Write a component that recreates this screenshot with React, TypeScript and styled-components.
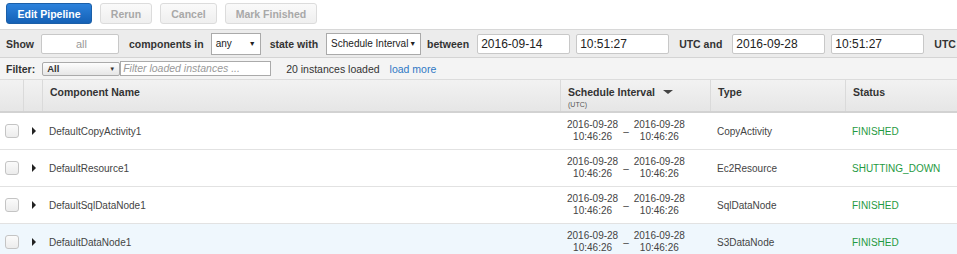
import * as React from "react"
import styled, { createGlobalStyle } from "styled-components"

const GlobalStyle = createGlobalStyle`
  body {
    margin: 0;
    font-family: "Liberation Sans", Arial, sans-serif;
    font-size: 12px;
    color: #333;
    background: #fff;
    overflow: hidden;
  }
`

const rows = [
  { name: 'DefaultCopyActivity1', type: 'CopyActivity', status: 'FINISHED' },
  { name: 'DefaultResource1', type: 'Ec2Resource', status: 'SHUTTING_DOWN' },
  { name: 'DefaultSqlDataNode1', type: 'SqlDataNode', status: 'FINISHED' },
  { name: 'DefaultDataNode1', type: 'S3DataNode', status: 'FINISHED', hover: true },
]

const Toolbar = styled.div`
  display: flex;
  gap: 8px;
  padding: 3px 6px 0;
  height: 26px;
`

const Button = styled.button<{ $primary?: boolean; $w: number }>`
  width: ${p => p.$w}px;
  height: 21px;
  padding: 0;
  border-radius: 3px;
  font-family: inherit;
  font-size: 10.5px;
  font-weight: bold;
  border: 1px solid ${p => p.$primary ? '#1b5fa8' : '#dcdcdc'};
  color: ${p => p.$primary ? '#fff' : '#a8a8a8'};
  background: ${p => p.$primary
    ? 'linear-gradient(#2c82dc, #1561b6)'
    : 'linear-gradient(#fafafa, #efefef)'};
`

const FilterBar = styled.div`
  display: flex;
  align-items: center;
  height: 27px;
  padding-left: 6px;
  background: #ececec;
  border-top: 1px solid #d8d8d8;
  border-bottom: 1px solid #d4d4d4;
  white-space: nowrap;
  overflow: hidden;
`

const Label = styled.span<{ $ml?: number }>`
  font-weight: bold;
  font-size: 10.5px;
  color: #333;
  margin-left: ${p => p.$ml ?? 0}px;
`

const TextBox = styled.div<{ $w: number; $ml: number; $center?: boolean }>`
  box-sizing: border-box;
  flex-shrink: 0;
  width: ${p => p.$w}px;
  height: 20px;
  margin-left: ${p => p.$ml}px;
  background: #fff;
  border: 1px solid #c8c8c8;
  border-radius: 2px;
  font-size: 12px;
  line-height: 18px;
  padding-left: 3px;
  color: #222;
  text-align: ${p => p.$center ? 'center' : 'left'};
`

const Muted = styled.span`
  color: #999;
  font-size: 11px;
`

const Select = styled.div<{ $w: number; $ml: number }>`
  box-sizing: border-box;
  flex-shrink: 0;
  display: flex;
  align-items: center;
  justify-content: space-between;
  width: ${p => p.$w}px;
  height: 22px;
  margin-left: ${p => p.$ml}px;
  padding: 0 4px;
  background: #fff;
  border: 1px solid #aaa;
  font-size: 10px;
  color: #222;
  &::after {
    content: '▼';
    font-size: 7px;
    color: #222;
  }
`

const FilterRow = styled.div`
  display: flex;
  align-items: center;
  height: 21px;
  padding-left: 6px;
  background: #f4f4f4;
  border-bottom: 1px solid #dcdcdc;
  white-space: nowrap;
`

const SmallSelect = styled.div`
  box-sizing: border-box;
  display: flex;
  align-items: center;
  justify-content: space-between;
  width: 78px;
  height: 14px;
  margin-left: 7px;
  padding: 0 4px;
  background: linear-gradient(#fdfdfd, #e6e6e6);
  border: 1px solid #aaa;
  border-radius: 2px;
  font-size: 9.5px;
  font-weight: bold;
  color: #333;
  &::after {
    content: '▼';
    font-size: 6px;
  }
`

const FilterInput = styled.div`
  box-sizing: border-box;
  width: 151px;
  height: 15px;
  background: #fff;
  border: 1px solid #aaa;
  padding-left: 2px;
  font-size: 10.5px;
  line-height: 13px;
  font-style: italic;
  color: #999;
`

const Count = styled.span`
  margin-left: 15px;
  font-size: 10.5px;
  color: #333;
`

const LoadMore = styled.span`
  margin-left: 10px;
  font-size: 10.5px;
  color: #2f78c4;
`

const Grid = styled.div<{ $bg?: string }>`
  display: grid;
  grid-template-columns: 23px 19px 518px 150px 135px 1fr;
  background: ${p => p.$bg ?? '#fff'};
`

const HeaderRow = styled(Grid)`
  height: 31px;
  background: linear-gradient(#f2f2f2, #e6e6e6);
  border-bottom: 2px solid #d2d2d2;
`

const HeadCell = styled.div<{ $border?: boolean }>`
  padding: 6px 7px 0;
  font-weight: bold;
  font-size: 10.5px;
  color: #333;
  border-left: ${p => p.$border === false ? 'none' : '1px solid #dadada'};
`

const SortTitle = styled.div`
  display: flex;
  align-items: center;
  gap: 8px;
`

const Utc = styled.div`
  font-size: 7px;
  font-weight: normal;
  color: #555;
  margin-top: 3px;
`

const Row = styled(Grid)`
  height: 36px;
  border-bottom: 1px solid #e2e2e2;
  align-items: center;
  font-size: 10px;
  color: #444;
`

const CheckCell = styled.div`
  display: flex;
  justify-content: center;
  padding-left: 1px;
`

const Checkbox = styled.div`
  width: 12px;
  height: 12px;
  border: 1px solid #c4c4c4;
  border-radius: 3px;
  background: linear-gradient(#fbfbfb, #ececec);
`

const Expander = styled.div`
  width: 0;
  height: 0;
  margin-left: 9px;
  border-top: 4px solid transparent;
  border-bottom: 4px solid transparent;
  border-left: 4px solid #222;
`

const NameCell = styled.div`
  padding-left: 7px;
`

const Interval = styled.div`
  display: flex;
  align-items: center;
  padding-left: 7px;
`

const Stamp = styled.div`
  text-align: center;
  line-height: 12px;
`

const Dash = styled.span`
  margin: 0 5px;
`

const TextCell = styled.div`
  padding-left: 7px;
`

const Status = styled.div`
  padding-left: 7px;
  color: #1f9a3f;
`

const Arrow = () => (
  <svg width="10" height="6" viewBox="0 0 10 6">
    <path d="M0 1 L10 1 L5 5 Z" fill="#444" />
  </svg>
)

const DateStamp = () => (
  <Stamp>2016-09-28<br />10:46:26</Stamp>
)

export default function App() {
  return (
    <>
      <GlobalStyle />
      <Toolbar>
        <Button $primary $w={86}>Edit Pipeline</Button>
        <Button $w={52}>Rerun</Button>
        <Button $w={57}>Cancel</Button>
        <Button $w={92}>Mark Finished</Button>
      </Toolbar>
      <FilterBar>
        <Label>Show</Label>
        <TextBox $w={78} $ml={7} $center><Muted>all</Muted></TextBox>
        <Label $ml={10}>components in</Label>
        <Select $w={50} $ml={7}>any</Select>
        <Label $ml={9}>state with</Label>
        <Select $w={95} $ml={8}>Schedule Interval</Select>
        <Label $ml={6}>between</Label>
        <TextBox $w={93} $ml={8}>2016-09-14</TextBox>
        <TextBox $w={93} $ml={6}>10:51:27</TextBox>
        <Label $ml={10}>UTC and</Label>
        <TextBox $w={93} $ml={10}>2016-09-28</TextBox>
        <TextBox $w={93} $ml={6}>10:51:27</TextBox>
        <Label $ml={10}>UTC</Label>
      </FilterBar>
      <FilterRow>
        <Label>Filter:</Label>
        <SmallSelect>All</SmallSelect>
        <FilterInput>Filter loaded instances ...</FilterInput>
        <Count>20 instances loaded</Count>
        <LoadMore>load more</LoadMore>
      </FilterRow>
      <HeaderRow>
        <HeadCell $border={false} />
        <HeadCell />
        <HeadCell>Component Name</HeadCell>
        <HeadCell>
          <SortTitle>Schedule Interval <Arrow /></SortTitle>
          <Utc>(UTC)</Utc>
        </HeadCell>
        <HeadCell>Type</HeadCell>
        <HeadCell>Status</HeadCell>
      </HeaderRow>
      {rows.map(r => (
        <Row key={r.name} $bg={r.hover ? '#eff7fd' : '#fff'}>
          <CheckCell><Checkbox /></CheckCell>
          <Expander />
          <NameCell>{r.name}</NameCell>
          <Interval>
            <DateStamp />
            <Dash>–</Dash>
            <DateStamp />
          </Interval>
          <TextCell>{r.type}</TextCell>
          <Status>{r.status}</Status>
        </Row>
      ))}
    </>
  )
}
